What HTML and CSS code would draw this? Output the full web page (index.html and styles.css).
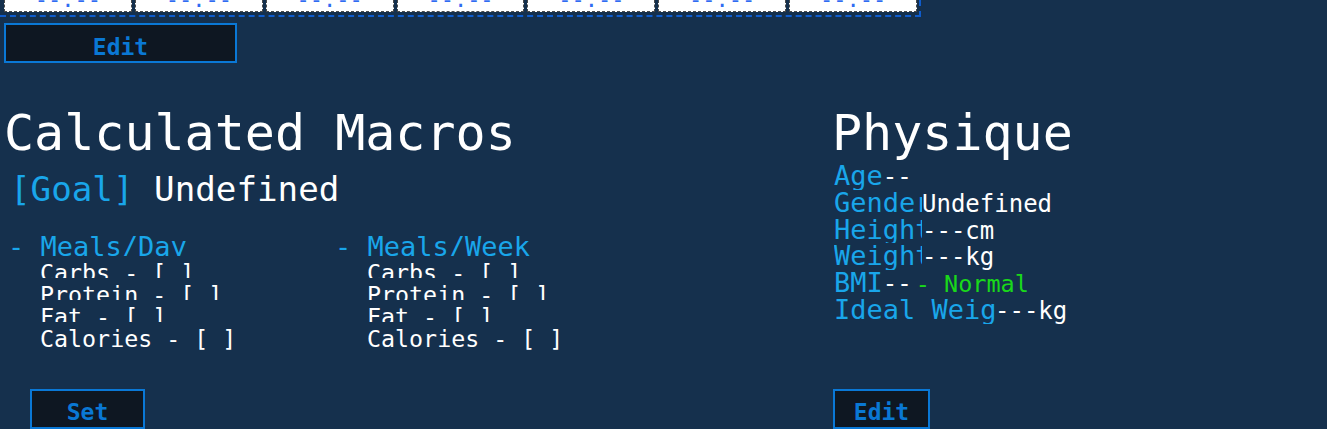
FILE: index.html
```html
<!DOCTYPE html>
<html>
<head>
<meta charset="utf-8">
<link rel="stylesheet" href="styles.css">
</head>
<body>
<div class="page">
  <div class="strip">
    <div class="cell"><span class="cell-text">--:--</span></div>
    <div class="cell"><span class="cell-text">--:--</span></div>
    <div class="cell"><span class="cell-text">--:--</span></div>
    <div class="cell"><span class="cell-text">--:--</span></div>
    <div class="cell"><span class="cell-text">--:--</span></div>
    <div class="cell"><span class="cell-text">--:--</span></div>
    <div class="cell"><span class="cell-text">--:--</span></div>
  </div>
  <button class="btn btn-top">Edit</button>
  <div class="panels">
    <section class="macros">
      <h1 class="title">Calculated Macros</h1>
      <div class="goal"><span class="goal-tag">[Goal]</span> Undefined</div>
      <div class="meals">
        <div class="meal-col">
          <div class="meal-head">- Meals/Day</div>
          <div class="meal-item">Carbs - [ ]</div>
          <div class="meal-item">Protein - [ ]</div>
          <div class="meal-item">Fat - [ ]</div>
          <div class="meal-item meal-last">Calories - [ ]</div>
        </div>
        <div class="meal-col">
          <div class="meal-head">- Meals/Week</div>
          <div class="meal-item">Carbs - [ ]</div>
          <div class="meal-item">Protein - [ ]</div>
          <div class="meal-item">Fat - [ ]</div>
          <div class="meal-item meal-last">Calories - [ ]</div>
        </div>
      </div>
      <button class="btn btn-set">Set</button>
    </section>
    <section class="physique">
      <h1 class="title">Physique</h1>
      <div class="rows">
        <div class="row"><span class="lbl">Age</span><span class="val">--</span></div>
        <div class="row"><span class="lbl lbl-mid">Gender</span><span class="val">Undefined</span></div>
        <div class="row"><span class="lbl lbl-mid">Height</span><span class="val">---cm</span></div>
        <div class="row"><span class="lbl lbl-mid">Weight</span><span class="val">---kg</span></div>
        <div class="row"><span class="lbl">BMI</span><span class="val">--<span class="ok">- Normal</span></span></div>
        <div class="row"><span class="lbl lbl-wide">Ideal Weight</span><span class="val">---kg</span></div>
      </div>
      <button class="btn btn-edit">Edit</button>
    </section>
  </div>
</div>
</body>
</html>
```
FILE: styles.css
```css
html, body {
  margin: 0;
  padding: 0;
  background: #15304d;
  overflow: hidden;
}
body {
  width: 1327px;
  height: 429px;
  font-family: "DejaVu Sans Mono", "Liberation Mono", monospace;
  color: #ffffff;
}
.page {
  padding-left: 4px;
}
.strip {
  display: flex;
  gap: 3px;
  width: 913px;
  margin-left: -4px;
  padding: 0 2px 3px 4px;
  border-right: 2px dashed #0f5ccc;
  border-bottom: 2px dashed #0f5ccc;
}
.cell {
  flex: 1;
  height: 11px;
  overflow: hidden;
  background: #ffffff;
  border: 1px dashed #4a4a4a;
  border-top: none;
  text-align: center;
}
.cell-text {
  display: block;
  margin-top: -11px;
  font-size: 22px;
  line-height: 22px;
  color: #2f6cf2;
}
.btn {
  display: block;
  box-sizing: border-box;
  height: 40px;
  padding: 6px 0 0;
  margin: 0;
  background: #0e1722;
  border: 2px solid #0a78d6;
  color: #0a78d4;
  font-family: "DejaVu Sans Mono", "Liberation Mono", monospace;
  font-weight: bold;
  font-size: 23px;
  line-height: 26px;
  text-align: center;
}
.btn-top {
  width: 233px;
  margin-top: 6px;
  padding-top: 7px;
}
.panels {
  display: flex;
  margin-top: 41px;
}
.macros {
  width: 828px;
}
.title {
  margin: 0;
  font-weight: normal;
  font-size: 50px;
  line-height: 58px;
  color: #ffffff;
}
.goal {
  margin-top: 7px;
  margin-left: 6px;
  font-size: 34.2px;
  line-height: 40px;
  color: #ffffff;
}
.goal-tag {
  color: #19a6ea;
}
.meals {
  display: flex;
  margin-top: 22px;
  margin-left: 4px;
}
.meal-col {
  width: 327px;
}
.meal-head {
  height: 25px;
  overflow: hidden;
  font-size: 27px;
  line-height: normal;
  color: #19a6ea;
  white-space: pre;
}
.meal-item {
  height: 22px;
  overflow: hidden;
  padding-left: 32px;
  font-size: 23.3px;
  line-height: 33px;
  white-space: pre;
}
.meal-item.meal-last {
  height: 33px;
}
.btn-set {
  width: 115px;
  margin-top: 34px;
  margin-left: 26px;
}
.physique {
  flex: 1;
}
.rows {
  margin-top: 1px;
  padding-left: 2px;
}
.row {
  display: flex;
  align-items: baseline;
  height: 26.8px;
}
.lbl {
  flex: none;
  font-size: 27px;
  line-height: 26.8px;
  color: #19a6ea;
  white-space: nowrap;
  overflow: hidden;
}
.lbl-mid {
  width: 88px;
}
.lbl-wide {
  width: 161px;
}
.val {
  font-size: 24px;
  line-height: 26.8px;
  color: #ffffff;
  white-space: pre;
}
.ok {
  margin-left: 4px;
  font-size: 23.5px;
  color: #1ad81a;
}
.btn-edit {
  width: 97px;
  margin-top: 65px;
  margin-left: 1px;
}
```
